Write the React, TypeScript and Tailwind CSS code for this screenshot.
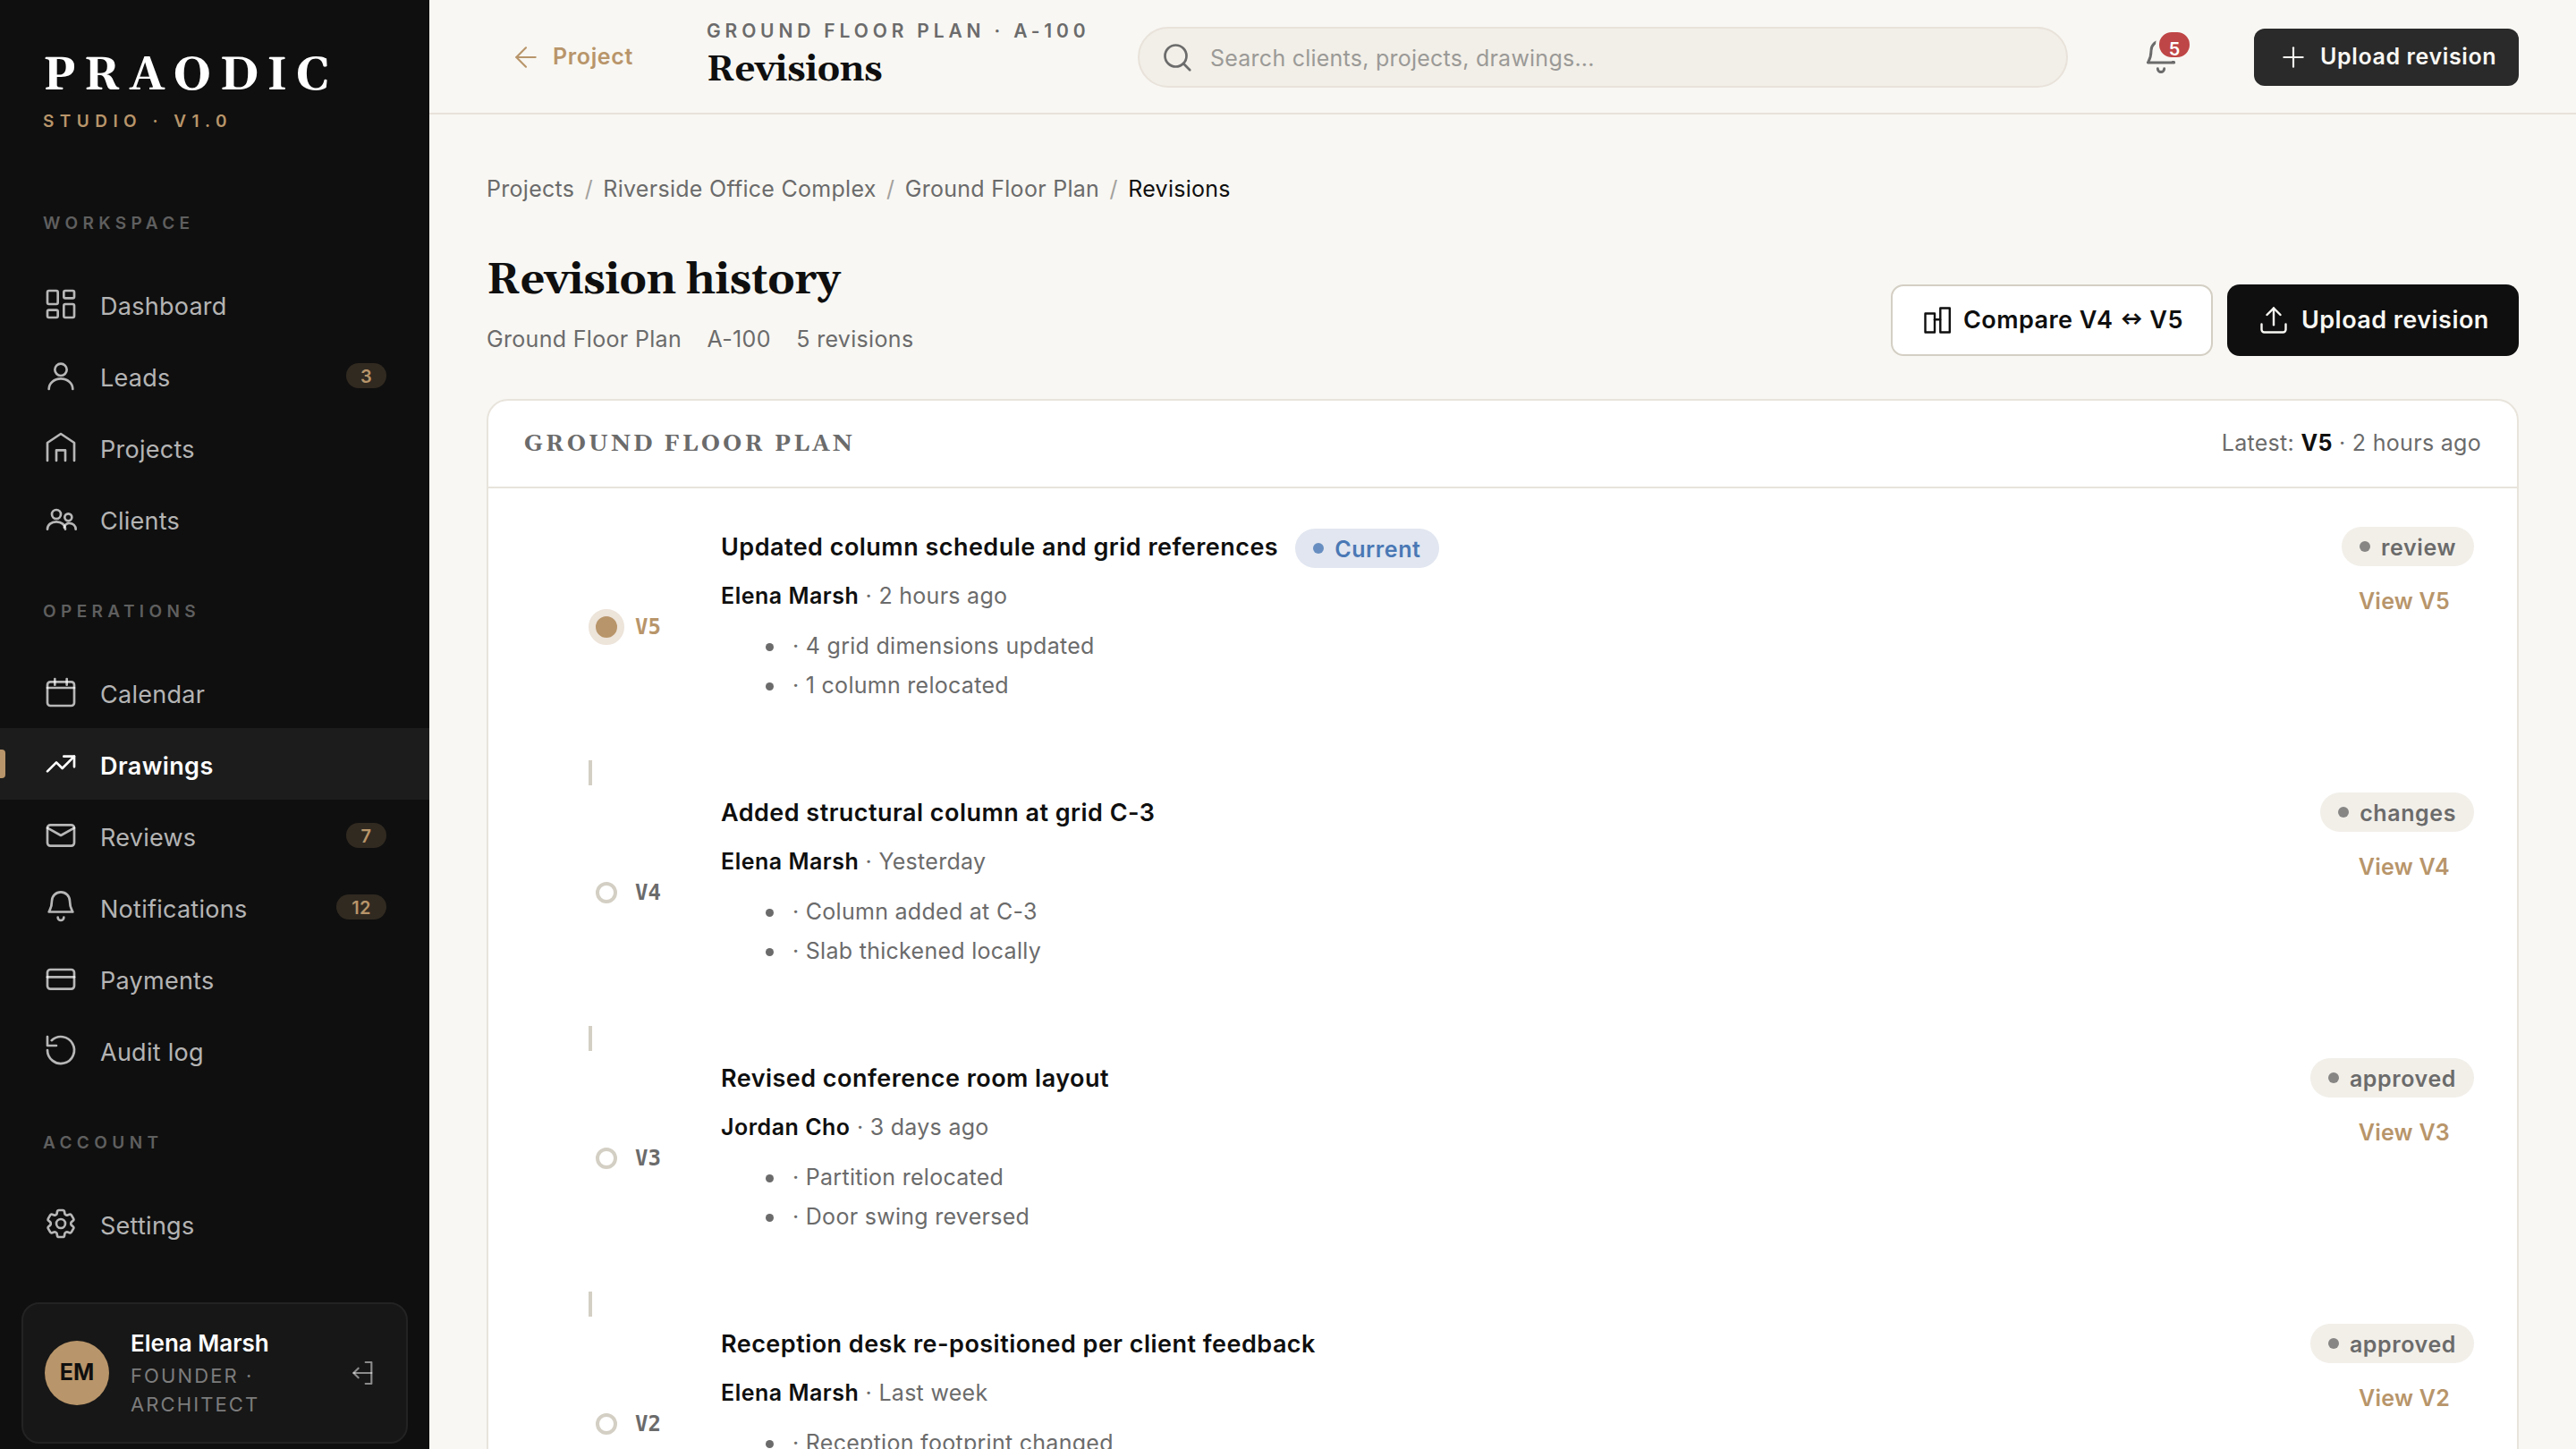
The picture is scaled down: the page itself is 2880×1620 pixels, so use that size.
import type { ReactNode } from "react";
import clsx from "clsx";

const serif = "font-['Gelasio',Georgia,'Liberation_Serif',serif]";

type IconProps = { children: ReactNode; className?: string; stroke?: number };

function Icon({ children, className = "size-10", stroke = 1.6 }: IconProps) {
  return (
    <svg
      viewBox="0 0 24 24"
      fill="none"
      stroke="currentColor"
      strokeWidth={stroke}
      strokeLinecap="round"
      strokeLinejoin="round"
      className={clsx("shrink-0", className)}
    >
      {children}
    </svg>
  );
}

const bell = (
  <>
    <path d="M6 8a6 6 0 0 1 12 0c0 4 1.1 5.6 2 7.3H4C4.9 13.6 6 12 6 8Z" />
    <path d="M10 19a2 2 0 0 0 4 0" />
  </>
);

const gear =
  "M9.594 3.94c.09-.542.56-.94 1.11-.94h2.593c.55 0 1.02.398 1.11.94l.213 1.281c.063.374.313.686.645.87.074.04.147.083.22.127.325.196.72.257 1.075.124l1.217-.456a1.125 1.125 0 0 1 1.37.49l1.296 2.247a1.125 1.125 0 0 1-.26 1.431l-1.003.827c-.293.241-.438.613-.43.992a7.723 7.723 0 0 1 0 .255c-.008.378.137.75.43.991l1.004.827c.424.35.534.955.26 1.43l-1.298 2.247a1.125 1.125 0 0 1-1.369.491l-1.217-.456c-.355-.133-.75-.072-1.076.124a6.47 6.47 0 0 1-.22.128c-.331.183-.581.495-.644.869l-.213 1.281c-.09.543-.56.94-1.11.94h-2.594c-.55 0-1.019-.398-1.11-.94l-.213-1.281c-.062-.374-.312-.686-.644-.87a6.52 6.52 0 0 1-.22-.127c-.325-.196-.72-.257-1.076-.124l-1.217.456a1.125 1.125 0 0 1-1.369-.49l-1.297-2.247a1.125 1.125 0 0 1 .26-1.431l1.004-.827c.292-.24.437-.613.43-.991a6.932 6.932 0 0 1 0-.255c.007-.38-.138-.751-.43-.992l-1.004-.827a1.125 1.125 0 0 1-.26-1.43l1.297-2.247a1.125 1.125 0 0 1 1.37-.491l1.216.456c.356.133.751.072 1.076-.124.072-.044.146-.086.22-.128.332-.183.582-.495.644-.869l.214-1.28Z";

const icons: Record<string, ReactNode> = {
  dashboard: (
    <>
      <rect x="3" y="3" width="7" height="9" rx="1" />
      <rect x="14" y="3" width="7" height="5" rx="1" />
      <rect x="14" y="12" width="7" height="9" rx="1" />
      <rect x="3" y="16" width="7" height="5" rx="1" />
    </>
  ),
  leads: (
    <>
      <circle cx="12" cy="8" r="4" />
      <path d="M4 21c0-4 3.6-7 8-7s8 3 8 7" />
    </>
  ),
  projects: (
    <>
      <path d="M3 21V9l9-6 9 6v12" />
      <path d="M9 21v-7h6v7" />
    </>
  ),
  clients: (
    <>
      <circle cx="9" cy="9" r="3" />
      <circle cx="17" cy="11" r="2.4" />
      <path d="M3 19c0-3 2.7-5 6-5s6 2 6 5" />
      <path d="M14.3 17.8c.4-1.7 1.8-2.8 3.5-2.8 2.4 0 4.2 1.7 4.2 4" />
    </>
  ),
  calendar: (
    <>
      <rect x="3" y="5" width="18" height="16" rx="2" />
      <path d="M3 9h18" />
      <path d="M8 3v4" />
      <path d="M16 3v4" />
    </>
  ),
  drawings: (
    <>
      <path d="m3 17 6-6 4 4 8-8" />
      <path d="M14 7h7v7" />
    </>
  ),
  reviews: (
    <>
      <rect x="3" y="5" width="18" height="14" rx="2" />
      <path d="m3 7 9 5 9-5" />
    </>
  ),
  notifications: bell,
  payments: (
    <>
      <rect x="3" y="6" width="18" height="13" rx="2" />
      <path d="M3 11h18" />
    </>
  ),
  audit: (
    <>
      <path d="M3 12a9 9 0 1 0 2.8-6.5" />
      <path d="M3 3v6h6" />
    </>
  ),
  settings: (
    <>
      <circle cx="12" cy="12" r="3" />
      <path d={gear} />
    </>
  ),
};

type NavEntry = { icon: string; label: string; badge?: string; active?: boolean };

const navGroups: { title: string; items: NavEntry[] }[] = [
  {
    title: "Workspace",
    items: [
      { icon: "dashboard", label: "Dashboard" },
      { icon: "leads", label: "Leads", badge: "3" },
      { icon: "projects", label: "Projects" },
      { icon: "clients", label: "Clients" },
    ],
  },
  {
    title: "Operations",
    items: [
      { icon: "calendar", label: "Calendar" },
      { icon: "drawings", label: "Drawings", active: true },
      { icon: "reviews", label: "Reviews", badge: "7" },
      { icon: "notifications", label: "Notifications", badge: "12" },
      { icon: "payments", label: "Payments" },
      { icon: "audit", label: "Audit log" },
    ],
  },
  {
    title: "Account",
    items: [{ icon: "settings", label: "Settings" }],
  },
];

const revisions = [
  {
    version: "V5",
    title: "Updated column schedule and grid references",
    author: "Elena Marsh",
    when: "2 hours ago",
    changes: ["4 grid dimensions updated", "1 column relocated"],
    status: "review",
    current: true,
  },
  {
    version: "V4",
    title: "Added structural column at grid C-3",
    author: "Elena Marsh",
    when: "Yesterday",
    changes: ["Column added at C-3", "Slab thickened locally"],
    status: "changes",
    current: false,
  },
  {
    version: "V3",
    title: "Revised conference room layout",
    author: "Jordan Cho",
    when: "3 days ago",
    changes: ["Partition relocated", "Door swing reversed"],
    status: "approved",
    current: false,
  },
  {
    version: "V2",
    title: "Reception desk re-positioned per client feedback",
    author: "Elena Marsh",
    when: "Last week",
    changes: ["Reception footprint changed"],
    status: "approved",
    current: false,
  },
];

function NavItem({ icon, label, badge, active }: NavEntry) {
  return (
    <a
      className={clsx(
        "relative flex h-20 items-center gap-6 px-12",
        active ? "bg-[#1c1c1c] text-white" : "text-white/70"
      )}
    >
      {active && <span className="absolute left-0 top-6 h-8 w-1.5 rounded-r bg-[#b8956a]" />}
      <Icon>{icons[icon]}</Icon>
      <span
        className={clsx(
          "flex-1 pt-[5px] text-[27px] leading-9",
          active ? "font-semibold tracking-[0.4px]" : "tracking-[0.26px]"
        )}
      >
        {label}
      </span>
      {badge && (
        <span
          className={clsx(
            "flex h-7 items-center justify-center rounded-full bg-[#b8956a]/20 pt-0.5 text-[20px] font-semibold tracking-[0.3px] text-[#b8956a]",
            badge.length > 1 ? "w-14" : "w-[45px]"
          )}
        >
          {badge}
        </span>
      )}
    </a>
  );
}

function Sidebar() {
  return (
    <aside className="flex w-[480px] shrink-0 flex-col bg-[#0f0f0f]">
      <div className="h-[186px] px-12 pt-[53px]">
        <div className={clsx(serif, "text-[52px] font-bold leading-[64px] tracking-[9.4px] text-white")}>
          PRAODIC
        </div>
        <div className="mt-[5px] text-[19px] font-semibold leading-7 tracking-[6.45px] text-[#b8956a]">
          STUDIO · V1.0
        </div>
      </div>
      {navGroups.map((group) => (
        <nav key={group.title}>
          <div className="h-[114px] px-12 pt-[50px] text-[19px] font-semibold uppercase leading-7 tracking-[5.4px] text-[#5f5f5f]">
            {group.title}
          </div>
          {group.items.map((item) => (
            <NavItem key={item.label} {...item} />
          ))}
        </nav>
      ))}
      <div className="mx-6 mt-12 flex h-[158px] items-center rounded-[20px] border-2 border-[#232323] bg-[#171717] pl-6 pr-8">
        <div className="flex size-[72px] shrink-0 items-center justify-center rounded-full bg-[#b8956a] text-[25px] font-bold text-[#0f0f0f]">
          EM
        </div>
        <div className="ml-6 flex-1">
          <div className="text-[26px] font-semibold leading-9 text-white">Elena Marsh</div>
          <div className="mt-0.5 w-[160px] text-[22px] leading-8 tracking-[2.1px] text-[#7c7c7c]">
            FOUNDER · ARCHITECT
          </div>
        </div>
        <Icon className="size-8 text-white/50">
          <path d="M14 3h5v18h-5" />
          <path d="m8 8-4 4 4 4" />
          <path d="M4 12h15" />
        </Icon>
      </div>
    </aside>
  );
}

function Header() {
  return (
    <header className="flex h-32 items-center border-b-2 border-[#e8e2da] px-16 pt-0.5">
      <a className="flex w-[246px] items-center pl-7 text-[#b8956a]">
        <Icon className="size-8">
          <path d="M20 12H4" />
          <path d="m12 4-8 8 8 8" />
        </Icon>
        <span className="ml-3.5 text-[25px] font-semibold tracking-[0.65px]">Project</span>
      </a>
      <div className="-mt-1.5 w-[482px] whitespace-nowrap">
        <div className="text-[21px] font-semibold leading-[34px] tracking-[4.85px] text-[#6b6b6b]">
          GROUND FLOOR PLAN · A-100
        </div>
        <div className={clsx(serif, "pt-0.5 text-[40px] font-bold leading-[50px] tracking-[-0.4px] text-[#0f0f0f]")}>
          Revisions
        </div>
      </div>
      <div className="flex h-[68px] w-[1040px] items-center rounded-full border-2 border-[#e8e2da] bg-[#f2efe8] pl-6">
        <Icon className="size-9 text-[#6b6b6b]" stroke={1.8}>
          <circle cx="11" cy="11" r="8" />
          <path d="m21.5 21.5-4.8-4.8" />
        </Icon>
        <span className="ml-[19px] pt-[3px] text-[25px] tracking-[0.24px] text-[#9b9a97]">
          Search clients, projects, drawings...
        </span>
      </div>
      <div className="relative ml-[82px] size-11">
        <Icon className="size-11 text-[#6b6b6b]">{bell}</Icon>
        <span className="absolute -top-2.5 left-4 h-9 w-[42px] overflow-hidden rounded-full border-4 border-[#f8f7f3] bg-[#bf4646] text-center text-[20px] font-semibold leading-[39px] text-white">
          5
        </span>
      </div>
      <button className="ml-[82px] flex h-16 w-[296px] items-center rounded-xl bg-[#2a2a2a] pl-7 text-[#f8f7f3]">
        <Icon className="size-8">
          <path d="M12 4v16" />
          <path d="M4 12h16" />
        </Icon>
        <span className="ml-3.5 text-[25px] font-semibold tracking-[0.62px]">Upload revision</span>
      </button>
    </header>
  );
}

function Pill({ label, tone }: { label: string; tone: "gray" | "blue" }) {
  return (
    <span
      className={clsx(
        "flex h-11 items-center gap-3 rounded-full px-5 text-[25px] font-semibold tracking-[0.6px]",
        tone === "blue" ? "bg-[#e1e6f0] text-[#4a78b5]" : "bg-[#f2efe9] text-[#6b6b6b]"
      )}
    >
      <span className="size-3 rounded-full bg-current opacity-80" />
      <span className="pt-[3px]">{label}</span>
    </span>
  );
}

function RevisionRow({ rev, first }: { rev: (typeof revisions)[number]; first: boolean }) {
  return (
    <li className="flex h-[297px]">
      <div className="w-[148px]">
        <div className={clsx("h-7 w-1", !first && "bg-[#d4cfc4]")} />
        <div className="mt-[100px] flex h-10 items-center gap-3">
          {rev.current ? (
            <span className="size-10 rounded-full border-8 border-[#ede4da] bg-[#b8956a]" />
          ) : (
            <span className="mx-2 size-6 rounded-full border-4 border-[#d4cfc4] bg-white" />
          )}
          <span
            className={clsx(
              "font-['DejaVu_Sans_Mono',monospace] text-[24px] font-bold",
              rev.current ? "text-[#b8956a]" : "text-[#6b6b6b]"
            )}
          >
            {rev.version}
          </span>
        </div>
      </div>
      <div className="flex-1 pt-9 text-[25px] tracking-[0.28px] text-[#6b6b6b]">
        <div className="flex h-11 items-center gap-[19px]">
          <h3 className="pt-0.5 text-[27px] font-semibold tracking-[0.47px] text-[#0f0f0f]">{rev.title}</h3>
          {rev.current && (
            <div className="mt-1">
              <Pill label="Current" tone="blue" />
            </div>
          )}
        </div>
        <p className="mt-[13px] leading-10">
          <strong className="font-semibold tracking-[0.5px] text-[#0f0f0f]">{rev.author}</strong> · {rev.when}
        </p>
        <ul className="mt-[14px] leading-[44px]">
          {rev.changes.map((change) => (
            <li key={change} className="flex items-center pl-[50px]">
              <span className="mr-[21px] mt-0.5 size-[9px] rounded-full bg-current" />
              <span>· {change}</span>
            </li>
          ))}
        </ul>
      </div>
      <div className="flex flex-col items-end pt-9">
        <Pill label={rev.status} tone="gray" />
        <a className="mr-[27px] mt-[19px] text-[25px] font-semibold leading-10 tracking-[0.25px] text-[#b8956a]">
          View {rev.version}
        </a>
      </div>
    </li>
  );
}

export default function App() {
  return (
    <div className="flex h-[1620px] w-[2880px] overflow-hidden bg-[#f8f7f3] font-['Inter',sans-serif] antialiased">
      <Sidebar />
      <div className="flex-1">
        <Header />
        <main className="px-16 pt-[63px]">
          <div className="flex gap-[11.4px] text-[25px] leading-10 tracking-[0.28px] text-[#6b6b6b]">
            <span>Projects</span>
            <span className="text-[#a3a19d]">/</span>
            <span>Riverside Office Complex</span>
            <span className="text-[#a3a19d]">/</span>
            <span>Ground Floor Plan</span>
            <span className="text-[#a3a19d]">/</span>
            <span className="text-[#0f0f0f]">Revisions</span>
          </div>

          <div className="mt-[50px] flex items-end justify-between">
            <div>
              <h1 className={clsx(serif, "pt-[3px] text-[48px] font-bold leading-[60px] tracking-[-0.48px] text-[#0f0f0f]")}>
                Revision history
              </h1>
              <div className="mt-4 flex gap-[28.5px] text-[25px] leading-[38px] tracking-[0.32px] text-[#6b6b6b]">
                <span>Ground Floor Plan</span>
                <span>A-100</span>
                <span>5 revisions</span>
              </div>
            </div>
            <div className="flex gap-4 text-[27px] font-semibold tracking-[0.45px]">
              <button className="flex h-20 w-[360px] items-center rounded-[14px] border-2 border-[#d4cfc4] bg-white pl-8 text-[#0f0f0f]">
                <Icon className="size-9">
                  <rect x="3" y="7" width="7" height="14" />
                  <rect x="14.2" y="3" width="7" height="18" />
                  <path d="M10 11.5h4" />
                </Icon>
                <span className="ml-[11px] flex items-center pt-px">
                  Compare V4
                  <span className="ml-2 mr-[7px] pb-0.5 text-[19px] font-black">↔</span>
                  V5
                </span>
              </button>
              <button className="flex h-20 w-[326px] items-center rounded-[14px] bg-[#0f0f0f] pl-[34px] text-[#f8f7f3]">
                <Icon className="size-9">
                  <path d="M12 15.5V3" />
                  <path d="m7 8 5-5 5 5" />
                  <path d="M3 15v4a2 2 0 0 0 2 2h14a2 2 0 0 0 2-2v-4" />
                </Icon>
                <span className="ml-[13px] pt-px">Upload revision</span>
              </button>
            </div>
          </div>

          <section className="mt-12 rounded-3xl border-2 border-[#e8e4dc] bg-white">
            <div className="flex h-[98px] items-center justify-between border-b-2 border-[#e8e4dc] px-10">
              <h2 className={clsx(serif, "text-[26px] font-bold tracking-[3.06px] text-[#6b6b6b]")}>
                GROUND FLOOR PLAN
              </h2>
              <div className="text-[25px] tracking-[0.3px] text-[#6b6b6b]">
                Latest: <strong className="font-bold text-[#0f0f0f]">V5</strong> · 2 hours ago
              </div>
            </div>
            <ol className="pl-28 pr-12 pt-[7px]">
              {revisions.map((rev, i) => (
                <RevisionRow key={rev.version} rev={rev} first={i === 0} />
              ))}
            </ol>
          </section>
        </main>
      </div>
    </div>
  );
}
